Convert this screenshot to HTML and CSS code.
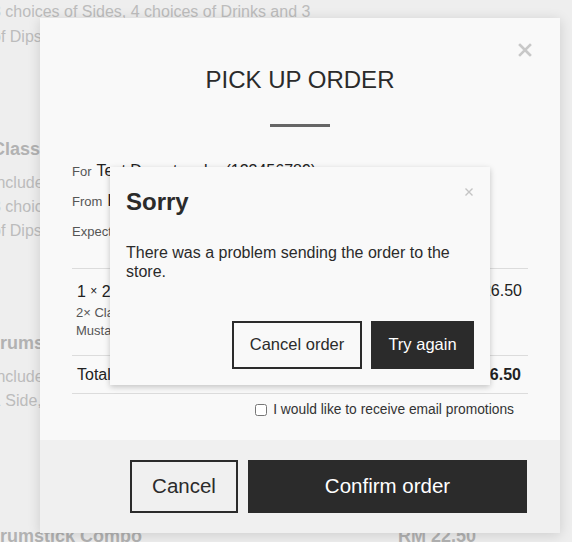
FILE: index.html
```html
<!DOCTYPE html>
<html>
<head>
<meta charset="utf-8">
<link rel="stylesheet" href="styles.css">
</head>
<body>
<div class="menu">
  <div class="frag">
    <p class="desc">3 choices of Sides, 4 choices of Drinks and 3</p>
    <p class="desc">of Dips</p>
  </div>
  <div class="item">
    <div class="item-head"><span class="name">Classic Combo</span><span class="price">RM 26.50</span></div>
    <p class="desc">Includes 2 pieces of Chicken, 1 Side, 1 Drink,</p>
    <p class="desc">3 choices of Sides, 4 choices of Drinks and 3</p>
    <p class="desc">of Dips</p>
  </div>
  <div class="item">
    <div class="item-head"><span class="name outdent">Drumstick Combo</span><span class="price">RM 19.50</span></div>
    <p class="desc">Includes 2 Drumsticks, 1 Side, 1 Drink</p>
    <p class="desc">1 Side, 4 choices of Drinks</p>
  </div>
  <div class="item">
    <div class="item-head"><span class="name outdent">Drumstick Compo</span><span class="price">RM 22.50</span></div>
  </div>
</div>

<div class="modal">
  <button class="modal-close" aria-label="Close">
    <svg width="14" height="14" viewBox="0 0 14 14"><path d="M2 2L12 12M12 2L2 12" stroke="#c8c8c8" stroke-width="2.6" stroke-linecap="square"/></svg>
  </button>
  <div class="modal-body">
    <h1 class="title">PICK UP ORDER</h1>
    <div class="bar"></div>
    <div class="info">
      <div class="info-row"><span class="label">For</span><span class="value">Test Do not make (123456789)</span></div>
      <div class="info-row"><span class="label">From</span><span class="value">IOI City Mall</span></div>
      <div class="info-row"><span class="label">Expected pick up time</span><span class="value">ASAP</span></div>
    </div>
    <div class="line-item">
      <div class="li-main"><span>1 <span class="times">×</span> 2pc Classic Combo</span><span class="li-price">RM 26.50</span></div>
      <div class="li-sub">2× Classic Chicken, Coleslaw, Pepsi, Honey</div>
      <div class="li-sub">Mustard</div>
    </div>
    <div class="total"><span>Total</span><span class="total-price">RM 26.50</span></div>
    <label class="promo"><input type="checkbox" class="chk"><span>I would like to receive email promotions</span></label>
  </div>
  <div class="modal-footer">
    <button class="btn btn-outline btn-lg">Cancel</button>
    <button class="btn btn-dark btn-lg btn-wide">Confirm order</button>
  </div>
</div>

<div class="dialog">
  <button class="dialog-close" aria-label="Close">
    <svg width="10" height="10" viewBox="0 0 10 10"><path d="M1.5 1.5L8.5 8.5M8.5 1.5L1.5 8.5" stroke="#c4c4c4" stroke-width="1.4"/></svg>
  </button>
  <h2 class="dialog-title">Sorry</h2>
  <p class="dialog-text">There was a problem sending the order to the store.</p>
  <div class="dialog-actions">
    <button class="btn btn-outline btn-sm btn-cancel-order">Cancel order</button>
    <button class="btn btn-dark btn-sm btn-try">Try again</button>
  </div>
</div>
</body>
</html>
```

FILE: styles.css
```css
* { box-sizing: border-box; }
html, body { margin: 0; padding: 0; }
body {
  width: 572px;
  height: 542px;
  overflow: hidden;
  background: #eeeeee;
  font-family: "Liberation Sans", Arial, sans-serif;
  position: relative;
}
p { margin: 0; }

/* background menu */
.menu {
  margin-left: -8px;
  width: 500px;
  color: #bcbcbc;
}
.desc {
  font-size: 16px;
  line-height: 24px;
  white-space: nowrap;
}
.frag .desc { line-height: 25px; }
.frag { margin-top: -1px; }
.item { margin-top: 88px; }
.item:last-child { margin-top: 111px; }
.item-head {
  display: grid;
  grid-template-columns: 406px auto;
  font-size: 18px;
  font-weight: bold;
  line-height: 24px;
  color: #b2b2b2;
  margin-bottom: 10px;
  white-space: nowrap;
}
.outdent { margin-left: -5px; }

/* main modal */
.modal {
  position: absolute;
  left: 40px;
  top: 18px;
  width: 520px;
  height: 515px;
  background: #f9f9f9;
  box-shadow: 0 2px 12px rgba(0,0,0,0.14);
  display: flex;
  flex-direction: column;
}
.modal-close, .dialog-close {
  position: absolute;
  border: 0;
  background: none;
  padding: 0;
  display: flex;
}
.modal-close { left: 478px; top: 25px; }
.modal-body {
  flex: 1;
  padding: 48px 32px 0;
  display: flex;
  flex-direction: column;
}
.title {
  margin: 0;
  text-align: center;
  font-size: 24px;
  line-height: 28px;
  font-weight: normal;
  color: #2b2b2b;
}
.bar {
  align-self: center;
  width: 60px;
  height: 3px;
  margin-top: 30px;
  background: #666;
}
.info {
  margin-top: 29px;
  padding-bottom: 22px;
  border-bottom: 1px solid #dcdcdc;
}
.info-row {
  display: flex;
  align-items: baseline;
  gap: 5px;
  height: 30px;
  line-height: 30px;
}
.label { font-size: 13px; color: #555; }
.value { font-size: 16px; color: #222; }

.line-item {
  padding: 12px 0 15px;
  border-bottom: 1px solid #dcdcdc;
}
.li-main {
  display: flex;
  justify-content: space-between;
  font-size: 16px;
  line-height: 20px;
  color: #222;
  padding-left: 5px;
  padding-right: 6px;
  margin-bottom: 2px;
}
.times { font-size: 12px; vertical-align: 2px; }
.li-sub {
  font-size: 13px;
  line-height: 18px;
  color: #555;
  padding-left: 4px;
}
.total {
  display: flex;
  justify-content: space-between;
  font-size: 16px;
  line-height: 20px;
  color: #222;
  padding: 9px 7px 8px 5px;
  border-bottom: 1px solid #dcdcdc;
}
.total-price { font-weight: bold; }
.promo {
  display: flex;
  align-items: center;
  justify-content: flex-end;
  gap: 6px;
  margin-top: 8px;
  padding-right: 14px;
  font-size: 13.8px;
  line-height: 16px;
  color: #333;
}
.chk {
  margin: 0;
  width: 12px;
  height: 12px;
}

.modal-footer {
  height: 93px;
  background: #f0f0f0;
  padding: 20px 33px 20px 0;
  display: flex;
  justify-content: flex-end;
  gap: 10px;
}

/* buttons */
.btn {
  font-family: "Liberation Sans", Arial, sans-serif;
  cursor: pointer;
  display: flex;
  align-items: center;
  justify-content: center;
  padding: 0 0 1px;
}
.btn-outline {
  background: transparent;
  border: 2px solid #2b2b2b;
  color: #2b2b2b;
}
.btn-dark {
  background: #2b2b2b;
  border: 0;
  color: #fff;
}
.btn-lg { height: 53px; width: 108px; font-size: 20.5px; }
.btn-wide { width: 279px; }
.btn-sm { height: 48px; font-size: 16.5px; }
.btn-cancel-order { width: 130px; }
.btn-try { width: 103px; }

/* error dialog */
.dialog {
  position: absolute;
  left: 110px;
  top: 167px;
  width: 380px;
  height: 218px;
  background: #f9f9f9;
  box-shadow: 0 2px 6px rgba(0,0,0,0.22);
  padding: 20px 16px 16px;
  display: flex;
  flex-direction: column;
}
.dialog-close { left: 354px; top: 20px; }
.dialog-title {
  margin: 0;
  font-size: 24px;
  line-height: 30px;
  font-weight: bold;
  color: #2b2b2b;
}
.dialog-text {
  margin-top: 26px;
  font-size: 16px;
  line-height: 19px;
  color: #2b2b2b;
  padding-right: 20px;
}
.dialog-actions {
  margin-top: auto;
  display: flex;
  justify-content: flex-end;
  gap: 9px;
}
```
